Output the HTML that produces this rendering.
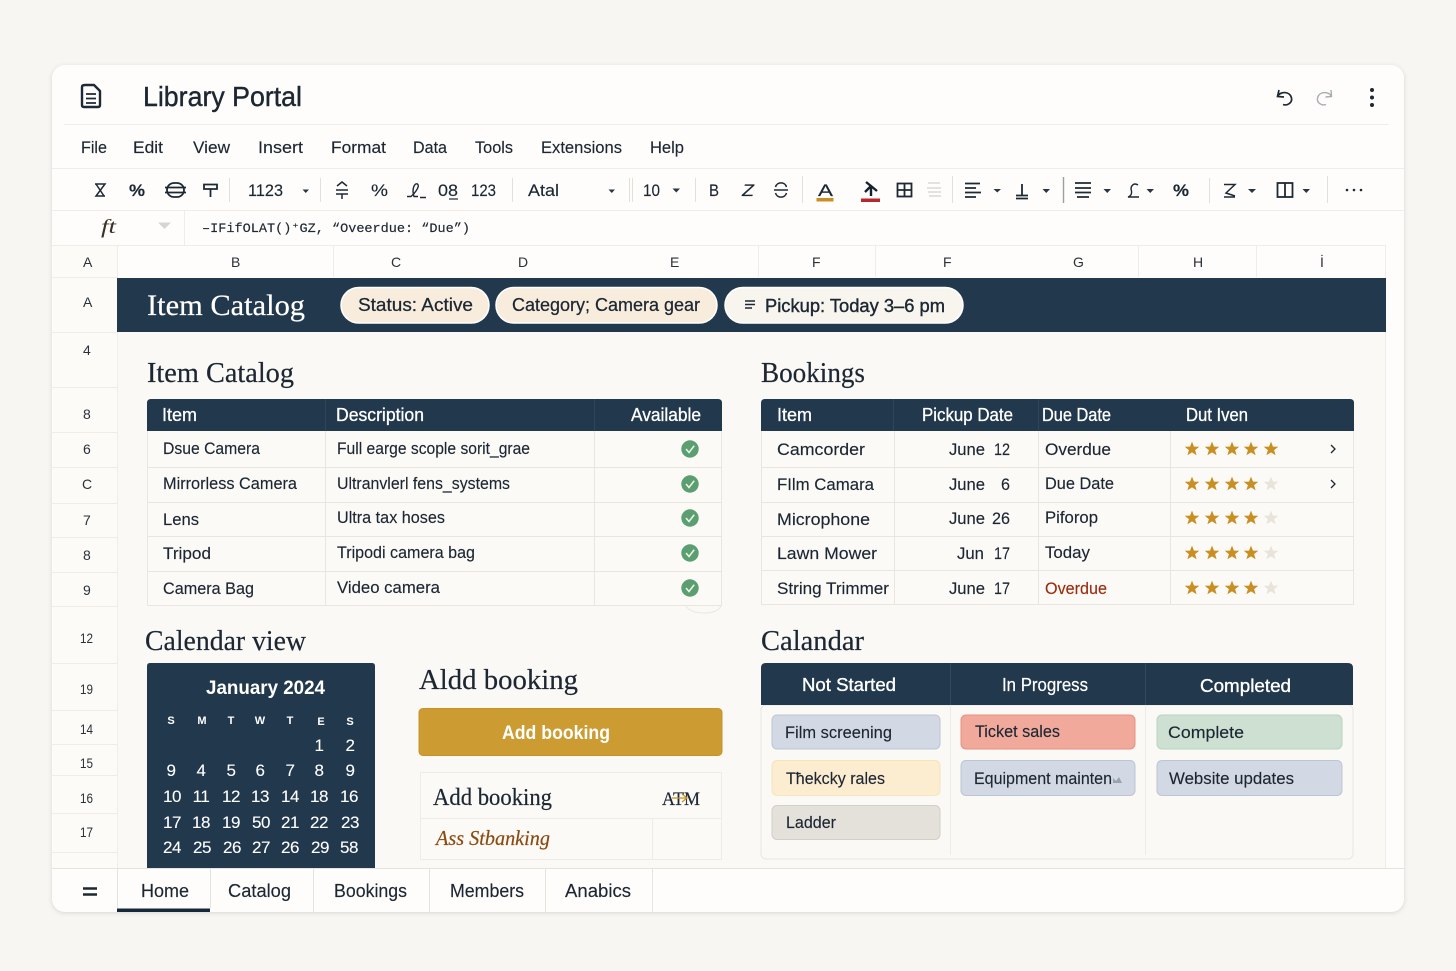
<!DOCTYPE html>
<html lang="en"><head><meta charset="utf-8"><title>Library Portal</title>
<style>
html,body{margin:0;padding:0;width:1456px;height:971px;background:#f7f6f3;overflow:hidden}
#card{position:absolute;left:52px;top:65px;width:1352px;height:847px;background:#fefdfb;border-radius:13px;box-shadow:0 1px 5px rgba(60,55,45,.16)}
svg{position:absolute;left:0;top:0}
text{font-family:"Liberation Sans",sans-serif;fill:#1c2733;font-size:17px;stroke:#1c2733;stroke-width:.15}
.r{font-family:"Liberation Serif",serif;stroke-width:.2}
.m{font-family:"Liberation Mono",monospace;font-size:13px}
.h{font-size:14px;fill:#2a3138;stroke-width:0}
.w{fill:#fff;font-weight:700;stroke:#fff;stroke-width:0}
.l{fill:#fff;stroke:#fff}
.c{fill:#fff;stroke:#fff;stroke-width:.1;font-size:17px;letter-spacing:-.5px;text-anchor:middle}
.d{fill:#fff;stroke:#fff;stroke-width:0;font-size:11px;font-weight:700;text-anchor:middle}
.ic{fill:none;stroke:#1d2935;stroke-width:1.8}
.g{stroke:#f0ede8;stroke-width:1;fill:none}
.cr{fill:#2a3540}
</style></head><body>
<div id="card"></div>
<svg width="1456" height="971" viewBox="0 0 1456 971" xmlns="http://www.w3.org/2000/svg">
<defs>
<polygon id="st" points="0,-7.4 2,-2.4 7.3,-2.2 3.1,1.1 4.6,6.3 0,3.4 -4.6,6.3 -3.1,1.1 -7.3,-2.2 -2,-2.4"/>
<g id="ck"><circle r="8.7" fill="#5b9e6f"/><path d="M-4,0 L-1,3.5 L4.2,-3.2" fill="none" stroke="#e8f3ea" stroke-width="1.6"/></g>
</defs>

<!-- sheet bg -->
<rect x="117" y="332" width="1269" height="536" fill="#fbf9f5"/>
<rect x="52.5" y="245" width="65" height="623" fill="#fcfbf8"/>
<path class="g" d="M64 124.5H1388M52 168.5H1404M52 210.5H1404M52 245.5H1386M52 277.5H117M52 332.5H117M52 387.5H117M52 432.5H117M52 467.5H117M52 503.5H117M52 537.5H117M52 572.5H117M52 606.5H117M52 663.5H117M52 710.5H117M52 744.5H117M52 775.5H117M52 813.5H117M52 852.5H117M117.5 245V868M333.5 245V277M758.5 245V277M875.5 245V277M1138.5 245V277M1256.5 245V277M1385.5 245V868M184.5 210V245"/>

<!-- title bar -->
<g fill="none" stroke="#1d2935" stroke-width="2.4" stroke-linejoin="round">
<path d="M85 85H94L100 91V105Q100 107 98 107H84Q82 107 82 105V87Q82 85 85 85Z"/>
<path d="M86 94H96M86 98.5H96M86 103H96" stroke-width="1.8"/>
</g>
<text x="143" y="106" style="font-size:28px;stroke-width:.4" textLength="159" lengthAdjust="spacingAndGlyphs">Library Portal</text>
<path d="M1279 90L1277.500 96.500L1284 97M1277.500 96.500C1280 91 1290 91 1291.500 98C1292.500 103 1287 106 1283 104.500" fill="none" stroke="#1d2935" stroke-width="1.7"/>
<path d="M1331 90L1331.500 96.500L1325.500 97M1331.500 96.500C1329 91 1319 91 1317.500 98C1316.500 103 1322 106 1326 104.500" fill="none" stroke="#a8adb0" stroke-width="1.4"/>
<circle cx="1372" cy="90" r="2" fill="#1d2935"/><circle cx="1372" cy="97.500" r="2" fill="#1d2935"/><circle cx="1372" cy="105" r="2" fill="#1d2935"/>

<!-- menu -->
<text x="81" y="153" textLength="26" lengthAdjust="spacingAndGlyphs">File</text>
<text x="133" y="153" textLength="30" lengthAdjust="spacingAndGlyphs">Edit</text>
<text x="193" y="153" textLength="37" lengthAdjust="spacingAndGlyphs">View</text>
<text x="258" y="153" textLength="45" lengthAdjust="spacingAndGlyphs">Insert</text>
<text x="331" y="153" textLength="55" lengthAdjust="spacingAndGlyphs">Format</text>
<text x="413" y="153" textLength="34" lengthAdjust="spacingAndGlyphs">Data</text>
<text x="475" y="153" textLength="38" lengthAdjust="spacingAndGlyphs">Tools</text>
<text x="541" y="153" textLength="81" lengthAdjust="spacingAndGlyphs">Extensions</text>
<text x="650" y="153" textLength="34" lengthAdjust="spacingAndGlyphs">Help</text>

<!-- toolbar -->
<path class="ic" style="stroke-width:1.5" d="M95 184H105L96 196H105M96 184L104 196"/>
<text x="129" y="196" textLength="16" lengthAdjust="spacingAndGlyphs" style="font-weight:700;font-size:17px">%</text>
<g class="ic"><rect x="167" y="183" width="17" height="14" rx="7"/><path d="M165 187.500H186M165 192.500H186"/></g>
<path class="ic" d="M204 184.500H217V189H204ZM210.500 189V197"/>
<path class="g" style="stroke:#e3e0da" d="M229.500 178V202M320.500 178V202M512.500 178V202M629.500 178V202M632.500 178V202M695.500 178V202M802.500 176V203M952.500 176V203M1209.500 178V203M1327.500 176V203"/>
<text x="248" y="196" textLength="35" lengthAdjust="spacingAndGlyphs">1123</text>
<path class="cr" d="M302.500 189.500H309L305.750 193Z"/>
<path class="ic" style="stroke-width:1.5" d="M337 186L342 182L347 186M336 190H348M336 194H348M342 194V199"/>
<text x="371" y="196" textLength="17" lengthAdjust="spacingAndGlyphs">%</text>
<path class="ic" style="stroke-width:1.4" d="M407 196.500H411C416 192 420 186 417.500 184C414.500 182.500 411.500 189 414 196.500H418M420 197.500H426"/>
<text x="438" y="196" textLength="20" lengthAdjust="spacingAndGlyphs">08</text><path class="ic" style="stroke-width:1.2" d="M449 199H458"/>
<text x="471" y="196" textLength="25" lengthAdjust="spacingAndGlyphs">123</text>
<text x="528" y="196" textLength="31" lengthAdjust="spacingAndGlyphs">Atal</text>
<path class="cr" d="M608.500 189.500H615L611.750 193Z"/>
<text x="643" y="196" textLength="17" lengthAdjust="spacingAndGlyphs">10</text>
<path class="cr" d="M672.500 188.500H680L676.250 192.500Z"/>
<text x="709" y="196" textLength="10" lengthAdjust="spacingAndGlyphs">B</text>
<text x="742" y="196" textLength="12" lengthAdjust="spacingAndGlyphs" style="font-style:italic">Z</text>
<path class="ic" style="stroke-width:1.5" d="M775.500 187C777 181.500 785 181.500 786.500 187M775.500 193C777 198.500 785 198.500 786.500 193M774 190H788"/>
<text x="818" y="196" textLength="15" lengthAdjust="spacingAndGlyphs">A</text><rect x="816.500" y="198" width="17" height="3.500" fill="#c98f22"/>
<path d="M866 182L871 186L877 191M871 186L865 192M871 186V196" fill="none" stroke="#14222f" stroke-width="2.4"/><rect x="861" y="198.500" width="19" height="3.500" fill="#b5282d"/>
<g class="ic"><rect x="897.500" y="183.500" width="14" height="13"/><path d="M904.500 183.500V196.500M897.500 190H911.500"/></g>
<g fill="none" stroke="#dcdad5" stroke-width="1.5"><path d="M928 183H940M927 188H941M928 192H941M929 196H941"/></g>
<path class="ic" d="M965 183.500H980M965 188H976M965 192.500H981M965 197H976"/>
<path class="cr" d="M993.500 189H1001L997.250 192.500Z"/>
<path class="ic" d="M1022 184V195M1016 195.500H1028M1016 198.500H1028"/>
<path class="cr" d="M1042.500 189H1050L1046.250 193Z"/>
<path d="M1063.500 177V203" stroke="#9aa0a3" stroke-width="1.4"/>
<path class="ic" d="M1075 183H1091M1075 188H1091M1075 192.500H1091M1077 197H1089"/>
<path class="cr" d="M1103.500 189H1111L1107.250 193Z"/>
<path class="ic" style="stroke-width:1.4" d="M1138 185C1133 182 1130 187 1131.500 191C1132 194 1131 196 1128 197H1139"/>
<path class="cr" d="M1146.500 189H1154L1150.250 193Z"/>
<text x="1173" y="196" textLength="16" lengthAdjust="spacingAndGlyphs" style="font-weight:700">%</text>
<path class="ic" style="stroke-width:1.5" d="M1224 184.500H1235L1226 193L1235 196M1224 197H1235"/>
<path class="cr" d="M1248 189H1256L1252 193Z"/>
<g class="ic"><rect x="1277.500" y="183" width="15" height="14"/><path d="M1285 183V197"/></g>
<path class="cr" d="M1302.500 189H1310L1306.250 193Z"/>
<circle cx="1347" cy="190" r="1.300" fill="#1d2935"/><circle cx="1354" cy="190" r="1.300" fill="#1d2935"/><circle cx="1361" cy="190" r="1.300" fill="#1d2935"/>

<!-- formula bar -->
<text class="r" x="101" y="233" textLength="15" lengthAdjust="spacingAndGlyphs" style="font-size:20px;font-style:italic;fill:#3a3125;stroke-width:0">ft</text>
<path d="M158 222.500H171L164.500 229Z" fill="#d7d5d0"/>
<text class="m" x="202" y="232" textLength="268" lengthAdjust="spacingAndGlyphs">&#8211;IFifOLAT()&#8314;GZ, &#8220;Oveerdue:  &#8220;Due&#8221;)</text>

<!-- column headers -->
<text class="h" x="83" y="267">A</text><text class="h" x="231" y="267">B</text><text class="h" x="391" y="267">C</text><text class="h" x="518" y="267">D</text><text class="h" x="670" y="267">E</text><text class="h" x="812" y="267">F</text><text class="h" x="943" y="267">F</text><text class="h" x="1073" y="267">G</text><text class="h" x="1193" y="267">H</text><text class="h" x="1320" y="267">&#304;</text>

<!-- row headers -->
<text class="h" x="83" y="307">A</text><text class="h" x="83" y="355">4</text><text class="h" x="83" y="419">8</text><text class="h" x="83" y="454">6</text><text class="h" x="82" y="489">C</text><text class="h" x="83" y="525">7</text><text class="h" x="83" y="560">8</text><text class="h" x="83" y="595">9</text><text class="h" x="80" y="643" textLength="13" lengthAdjust="spacingAndGlyphs">12</text><text class="h" x="80" y="694" textLength="13" lengthAdjust="spacingAndGlyphs">19</text><text class="h" x="80" y="734" textLength="13" lengthAdjust="spacingAndGlyphs">14</text><text class="h" x="80" y="768" textLength="13" lengthAdjust="spacingAndGlyphs">15</text><text class="h" x="80" y="803" textLength="13" lengthAdjust="spacingAndGlyphs">16</text><text class="h" x="80" y="837" textLength="13" lengthAdjust="spacingAndGlyphs">17</text>

<!-- banner -->
<rect x="117" y="278" width="1269" height="54" fill="#22384d"/>
<text class="r l" x="147" y="315" style="font-size:30px" textLength="158" lengthAdjust="spacingAndGlyphs">Item Catalog</text>
<rect x="341" y="287.500" width="148" height="35.500" rx="17.700" fill="#f8ecdc" stroke="#fff" stroke-width="1.500"/>
<text x="358" y="311" style="font-size:18px;stroke-width:.25" textLength="115" lengthAdjust="spacingAndGlyphs">Status: Active</text>
<rect x="496" y="287.500" width="221" height="35.500" rx="17.700" fill="#f8ecdc" stroke="#fff" stroke-width="1.500"/>
<text x="512" y="311" style="font-size:18px;stroke-width:.25" textLength="188" lengthAdjust="spacingAndGlyphs">Category; Camera gear</text>
<rect x="725" y="287.500" width="238" height="35.500" rx="17.700" fill="#f8f5ef" stroke="#fff" stroke-width="1.500"/>
<path d="M745 301H755M745 304.500H755M745 308H752" stroke="#1c2733" stroke-width="1.500" fill="none"/>
<text x="765" y="312" style="font-size:18px;stroke-width:.4" textLength="180" lengthAdjust="spacingAndGlyphs">Pickup: Today 3&#8211;6 pm</text>

<!-- headings -->
<text class="r" x="147" y="382" style="font-size:28px" textLength="147" lengthAdjust="spacingAndGlyphs">Item Catalog</text>
<text class="r" x="761" y="382" style="font-size:28px" textLength="104" lengthAdjust="spacingAndGlyphs">Bookings</text>
<text class="r" x="145" y="650" style="font-size:28px" textLength="161" lengthAdjust="spacingAndGlyphs">Calendar view</text>
<text class="r" x="761" y="650" style="font-size:28px" textLength="103" lengthAdjust="spacingAndGlyphs">Calandar</text>
<text class="r" x="419" y="689" style="font-size:29px" textLength="159" lengthAdjust="spacingAndGlyphs">Aldd booking</text>

<!-- table 1 -->
<rect x="147" y="431" width="575" height="174" fill="#fcfaf7"/>
<path d="M147.500 431V605.500H721.500V431M147 467.500H722M147 502.500H722M147 536.500H722M147 571.500H722M325.500 431V605M594.500 431V605" fill="none" stroke="#e9e6df"/>
<path d="M151 399H718Q722 399 722 403V431H147V403Q147 399 151 399Z" fill="#22384d"/>
<path d="M325.500 399V431M594.500 399V431" stroke="#2f4559"/>
<text class="l" x="162" y="421" textLength="35" lengthAdjust="spacingAndGlyphs" style="font-size:18px;stroke-width:.3">Item</text>
<text class="l" x="336" y="421" textLength="88" lengthAdjust="spacingAndGlyphs" style="font-size:18px;stroke-width:.3">Description</text>
<text class="l" x="631" y="421" textLength="70" lengthAdjust="spacingAndGlyphs" style="font-size:18px;stroke-width:.3">Available</text>
<text x="163" y="454" textLength="97" lengthAdjust="spacingAndGlyphs">Dsue Camera</text>
<text x="163" y="489" textLength="134" lengthAdjust="spacingAndGlyphs">Mirrorless Camera</text>
<text x="163" y="525" textLength="36" lengthAdjust="spacingAndGlyphs">Lens</text>
<text x="163" y="559" textLength="48" lengthAdjust="spacingAndGlyphs">Tripod</text>
<text x="163" y="594" textLength="91" lengthAdjust="spacingAndGlyphs">Camera Bag</text>
<text x="337" y="454" textLength="193" lengthAdjust="spacingAndGlyphs">Full earge scople sorit_grae</text>
<text x="337" y="489" textLength="173" lengthAdjust="spacingAndGlyphs">Ultranvlerl fens_systems</text>
<text x="337" y="523" textLength="108" lengthAdjust="spacingAndGlyphs">Ultra tax hoses</text>
<text x="337" y="558" textLength="138" lengthAdjust="spacingAndGlyphs">Tripodi camera bag</text>
<text x="337" y="593" textLength="103" lengthAdjust="spacingAndGlyphs">Video camera</text>
<use href="#ck" x="690" y="449"/><use href="#ck" x="690" y="484"/><use href="#ck" x="690" y="518"/><use href="#ck" x="690" y="553"/><use href="#ck" x="690" y="588"/>
<path d="M686 606Q690 613 704 613Q718 613 721 606" fill="none" stroke="#ebe8e2"/>

<!-- table 2 -->
<rect x="761" y="431" width="593" height="174" fill="#fcfaf7"/>
<path d="M761.500 431V604.500H1353.500V431M761 467.500H1354M761 502.500H1354M761 536.500H1354M761 570.500H1354M894.500 431V605M1038.500 431V605M1170.500 431V605" fill="none" stroke="#e9e6df"/>
<path d="M765 399H1350Q1354 399 1354 403V431H761V403Q761 399 765 399Z" fill="#22384d"/>
<path d="M893.500 399V431M1038.500 399V431" stroke="#2f4559"/>
<text class="l" x="777" y="421" textLength="35" lengthAdjust="spacingAndGlyphs" style="font-size:18px;stroke-width:.3">Item</text>
<text class="l" x="922" y="421" textLength="91" lengthAdjust="spacingAndGlyphs" style="font-size:18px;stroke-width:.3">Pickup Date</text>
<text class="l" x="1042" y="421" textLength="69" lengthAdjust="spacingAndGlyphs" style="font-size:18px;stroke-width:.3">Due Date</text>
<text class="l" x="1186" y="421" textLength="62" lengthAdjust="spacingAndGlyphs" style="font-size:18px;stroke-width:.3">Dut Iven</text>
<text x="777" y="455" textLength="88" lengthAdjust="spacingAndGlyphs">Camcorder</text>
<text x="777" y="490" textLength="97" lengthAdjust="spacingAndGlyphs">FIlm Camara</text>
<text x="777" y="525" textLength="93" lengthAdjust="spacingAndGlyphs">Microphone</text>
<text x="777" y="559" textLength="100" lengthAdjust="spacingAndGlyphs">Lawn Mower</text>
<text x="777" y="594" textLength="112" lengthAdjust="spacingAndGlyphs">String Trimmer</text>
<text x="949" y="455" textLength="36" lengthAdjust="spacingAndGlyphs">June</text><text x="994" y="455" textLength="16" lengthAdjust="spacingAndGlyphs">12</text>
<text x="949" y="490" textLength="36" lengthAdjust="spacingAndGlyphs">June</text><text x="1001" y="490" textLength="9" lengthAdjust="spacingAndGlyphs">6</text>
<text x="949" y="524" textLength="36" lengthAdjust="spacingAndGlyphs">June</text><text x="992" y="524" textLength="18" lengthAdjust="spacingAndGlyphs">26</text>
<text x="957" y="559" textLength="27" lengthAdjust="spacingAndGlyphs">Jun</text><text x="994" y="559" textLength="16" lengthAdjust="spacingAndGlyphs">17</text>
<text x="949" y="594" textLength="36" lengthAdjust="spacingAndGlyphs">June</text><text x="994" y="594" textLength="16" lengthAdjust="spacingAndGlyphs">17</text>
<text x="1045" y="455" textLength="66" lengthAdjust="spacingAndGlyphs">Overdue</text>
<text x="1045" y="489" textLength="69" lengthAdjust="spacingAndGlyphs">Due Date</text>
<text x="1045" y="523" textLength="53" lengthAdjust="spacingAndGlyphs">Piforop</text>
<text x="1045" y="558" textLength="45" lengthAdjust="spacingAndGlyphs">Today</text>
<text x="1045" y="594" textLength="62" lengthAdjust="spacingAndGlyphs" style="fill:#9c2c10;stroke:#9c2c10">Overdue</text>
<g fill="#c98f22">
<use href="#st" x="1192" y="449"/><use href="#st" x="1212" y="449"/><use href="#st" x="1232" y="449"/><use href="#st" x="1251" y="449"/><use href="#st" x="1271" y="449"/>
<use href="#st" x="1192" y="484"/><use href="#st" x="1212" y="484"/><use href="#st" x="1232" y="484"/><use href="#st" x="1251" y="484"/>
<use href="#st" x="1192" y="518"/><use href="#st" x="1212" y="518"/><use href="#st" x="1232" y="518"/><use href="#st" x="1251" y="518"/>
<use href="#st" x="1192" y="553"/><use href="#st" x="1212" y="553"/><use href="#st" x="1232" y="553"/><use href="#st" x="1251" y="553"/>
<use href="#st" x="1192" y="588"/><use href="#st" x="1212" y="588"/><use href="#st" x="1232" y="588"/><use href="#st" x="1251" y="588"/>
</g>
<g fill="#e9e4d9"><use href="#st" x="1271" y="484"/><use href="#st" x="1271" y="518"/><use href="#st" x="1271" y="553"/><use href="#st" x="1271" y="588"/></g>
<path d="M1331 445L1335 449L1331 453M1331 480L1335 484L1331 488" fill="none" stroke="#1c2733" stroke-width="1.300"/>

<!-- calendar -->
<path d="M150 663H372Q375 663 375 666V868H147V666Q147 663 150 663Z" fill="#22384d"/>
<text class="w" x="206" y="694" style="font-size:19px" textLength="119" lengthAdjust="spacingAndGlyphs">January 2024</text>
<text class="d" x="171" y="724">S</text><text class="d" x="202" y="724">M</text><text class="d" x="231" y="724">T</text><text class="d" x="260" y="724">W</text><text class="d" x="290" y="724">T</text><text class="d" x="321" y="725">E</text><text class="d" x="350" y="725">S</text>
<text class="c" x="319" y="751">1</text><text class="c" x="350" y="751">2</text>
<text class="c" x="171" y="776">9</text><text class="c" x="201" y="776">4</text><text class="c" x="231" y="776">5</text><text class="c" x="260" y="776">6</text><text class="c" x="290" y="776">7</text><text class="c" x="319" y="776">8</text><text class="c" x="350" y="776">9</text>
<text class="c" x="172" y="802">10</text><text class="c" x="201" y="802">11</text><text class="c" x="231" y="802">12</text><text class="c" x="260" y="802">13</text><text class="c" x="290" y="802">14</text><text class="c" x="319" y="802">18</text><text class="c" x="349" y="802">16</text>
<text class="c" x="172" y="828">17</text><text class="c" x="201" y="828">18</text><text class="c" x="231" y="828">19</text><text class="c" x="261" y="828">50</text><text class="c" x="290" y="828">21</text><text class="c" x="319" y="828">22</text><text class="c" x="350" y="828">23</text>
<text class="c" x="172" y="853">24</text><text class="c" x="202" y="853">25</text><text class="c" x="232" y="853">26</text><text class="c" x="261" y="853">27</text><text class="c" x="290" y="853">26</text><text class="c" x="320" y="853">29</text><text class="c" x="349" y="853">58</text>

<!-- add booking -->
<rect x="419" y="708.500" width="303" height="47" rx="4" fill="#cc9c33" stroke="#c79226"/>
<text class="w" x="502" y="739" style="font-size:19px" textLength="108" lengthAdjust="spacingAndGlyphs">Add booking</text>
<rect x="420" y="772" width="302" height="88" fill="#fcfaf7"/>
<path d="M420.500 772.500H721.500V859.500H420.500ZM420 818.500H722M652.500 818V860" fill="none" stroke="#efece6"/>
<text class="r" x="433" y="805" style="font-size:24px" textLength="119" lengthAdjust="spacingAndGlyphs">Add booking</text>
<text class="r" x="662" y="805" style="font-size:19px" textLength="38" lengthAdjust="spacingAndGlyphs">ATM</text>
<path d="M672 798H686M682 794L687 798L682 802" fill="none" stroke="#c98f22" stroke-width="1.200"/>
<text class="r" x="436" y="845" style="font-size:21px;font-style:italic;fill:#8a4a10;stroke:#8a4a10" textLength="114" lengthAdjust="spacingAndGlyphs">Ass Stbanking</text>

<!-- kanban -->
<rect x="761" y="705" width="592" height="154" rx="5" fill="#fbf9f5" stroke="#e9e6df"/>
<path d="M950.500 705V855M1145.500 705V855" stroke="#efece6"/>
<path d="M766 663H1348Q1353 663 1353 668V705H761V668Q761 663 766 663Z" fill="#22384d"/>
<path d="M950.500 663V705M1145.500 663V705" stroke="#33495d"/>
<text class="l" x="802" y="691" textLength="94" lengthAdjust="spacingAndGlyphs" style="stroke-width:.35;font-size:18px">Not Started</text>
<text class="l" x="1002" y="691" textLength="86" lengthAdjust="spacingAndGlyphs" style="stroke-width:.2;font-size:18px">In Progress</text>
<text class="l" x="1200" y="692" textLength="91" lengthAdjust="spacingAndGlyphs" style="stroke-width:.35;font-size:18px">Completed</text>

<rect x="772" y="715" width="168" height="34" rx="5" fill="#d3d9e4" stroke="#bcc5d3"/>
<text x="785" y="738" textLength="107" lengthAdjust="spacingAndGlyphs">Film screening</text>
<rect x="772" y="760.500" width="168" height="35" rx="5" fill="#fcedd0" stroke="#f6e4bf"/>
<text x="786" y="784" textLength="99" lengthAdjust="spacingAndGlyphs">T&#295;ekcky rales</text>
<rect x="772" y="805.500" width="168" height="34" rx="5" fill="#e4e1db" stroke="#d2cfc9"/>
<text x="786" y="828" textLength="50" lengthAdjust="spacingAndGlyphs">Ladder</text>

<rect x="961" y="715" width="174" height="34" rx="5" fill="#f1a99c" stroke="#e98f80"/>
<text x="975" y="737" textLength="85" lengthAdjust="spacingAndGlyphs">Ticket sales</text>
<rect x="961" y="760.500" width="174" height="35" rx="5" fill="#d3d9e4" stroke="#bcc5d3"/>
<text x="974" y="784" textLength="138" lengthAdjust="spacingAndGlyphs">Equipment mainten</text>
<path d="M1113 783V778L1116 781L1119 777L1122 783Z" fill="#9aa3ad"/>

<rect x="1157" y="715" width="185" height="34" rx="5" fill="#cde0d1" stroke="#b8d4be"/>
<text x="1168" y="738" textLength="76" lengthAdjust="spacingAndGlyphs">Complete</text>
<rect x="1157" y="760.500" width="185" height="35" rx="5" fill="#d3d9e4" stroke="#bcc5d3"/>
<text x="1169" y="784" textLength="125" lengthAdjust="spacingAndGlyphs">Website updates</text>

<!-- tabs -->
<path d="M52 868.500H1404" stroke="#e6e3dd"/>
<path d="M117.500 868V908M210.500 868V908M313.500 868V912M429.500 868V912M545.500 868V912M652.500 868V912" stroke="#e6e3dd"/>
<path d="M83 888.500H97M83 894.500H97" stroke="#1c2733" stroke-width="2.400"/>
<text x="141" y="897" style="font-size:18px" textLength="48" lengthAdjust="spacingAndGlyphs">Home</text>
<rect x="117" y="908.500" width="93" height="3.500" fill="#16293a"/>
<text x="228" y="897" style="font-size:18px" textLength="63" lengthAdjust="spacingAndGlyphs">Catalog</text>
<text x="334" y="897" style="font-size:18px" textLength="73" lengthAdjust="spacingAndGlyphs">Bookings</text>
<text x="450" y="897" style="font-size:18px" textLength="74" lengthAdjust="spacingAndGlyphs">Members</text>
<text x="565" y="897" style="font-size:18px" textLength="66" lengthAdjust="spacingAndGlyphs">Anabics</text>
</svg>
</body></html>
